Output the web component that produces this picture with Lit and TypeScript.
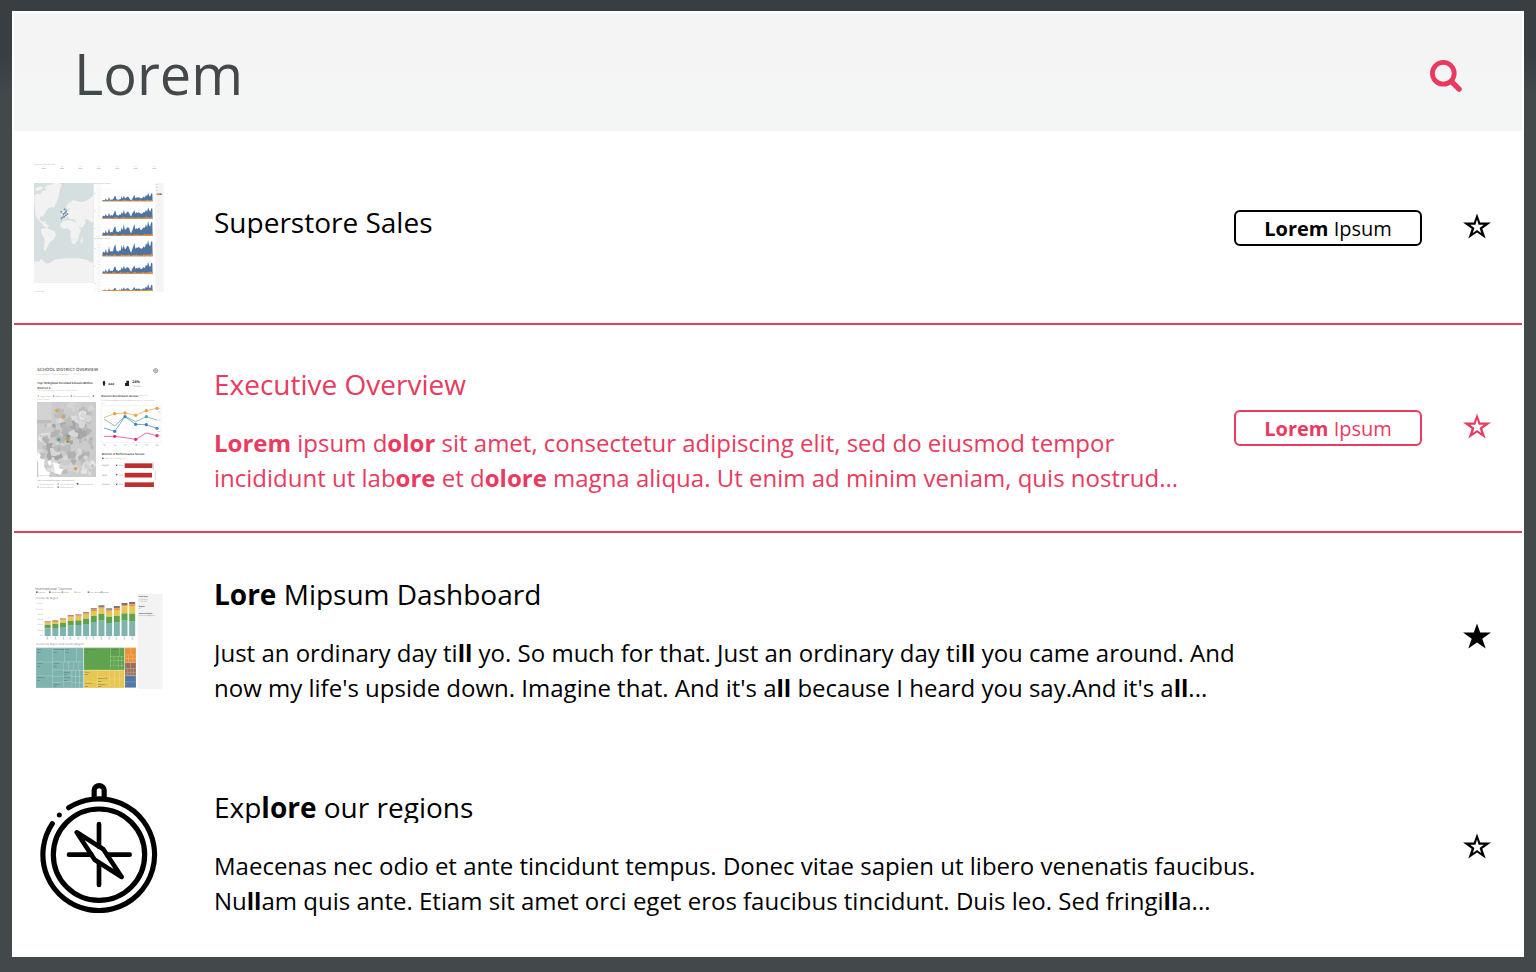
import { LitElement, html, svg, css, nothing } from "lit";
import { customElement, property } from "lit/decorators.js";

const rect = (x: number, y: number, w: number, h: number, fill: string) =>
  svg`<rect x=${x} y=${y} width=${w} height=${h} fill=${fill}></rect>`;
const label = (x: number, y: number, size: number, text: string, fill = "#888", weight = 400) =>
  svg`<text x=${x} y=${y} font-size=${size} fill=${fill} font-weight=${weight}>${text}</text>`;

/* Relative sales per month, shared by the six category charts. */
const WAVE = [.12,.16,.12,.3,.12,.14,.42,.15,.2,.16,.25,.5,.55,.22,.2,.16,.24,.22,.5,.3,.62,.32,.34,.5,.46,.4,.2,.12,.3,.48,.66,.34,.42,.38,.46,.4,.3,.34,.42,.5,.4,.72,.5,.98,.6,.5,.9,.85];

const salesArea = (base: number, h: number, k: number) => {
  const pow = [1, .75, .8, .7, .85, 1.4][k];
  const pts = WAVE.map((v, i) => {
    const wob = i % (k + 3) === 0 ? 1.12 : 1;
    return `${(236 + (i * 149) / 47).toFixed(1)},${(base - Math.pow(v, pow) * h * wob).toFixed(1)}`;
  });
  const low = WAVE.map((v, i) =>
    `${(236 + (i * 149) / 47).toFixed(1)},${(base - 1.5 - v * h * 0.1 - ((i + k) % 7 === 0 ? 3 : 0)).toFixed(1)}`);
  return svg`
    <polygon points="235,${base} ${pts.join(" ")} 386,${base}" fill="#4e74a3"></polygon>
    <polygon points="235,${base} ${low.join(" ")} 386,${base}" fill="#f28e2b"></polygon>`;
};

const superstore = () => svg`
  ${label(31, 30, 5, "Superstore Sales Overview", "#999")}
  ${[59, 114, 169, 224, 280, 335, 391].map(x => svg`${rect(x - 3, 34, 6, 1.5, "#ccc")}${rect(x - 6, 39, 12, 2, "#bbb")}`)}
  ${rect(30, 84, 179, 299, "#d5dfdf")}
  <g fill="#f1f2f1">
    <path d="M30 122l8-6 12 2 4-10 12-2 4 10 12-3 8 8-6 9 12 4 3 10-10 2-4 9-12 5-8 10-7 14-9 1-3 7 8 8 10-2 2 9 9 4-4 9-12-7-12-14-12-15z"></path>
    <path d="M36 99l14-6 8 5-9 8-15 2zM62 97l10-8 10 2-9 12 6 9-8 2zM76 92l12-8h20l6 6-6 11-2 18-8 20-8 19-9-3-6-15-1-17-9-11z"></path>
    <path d="M50 223l14-5 14 5 14 6 4 10-7 14-11 9-7 12-8 14-4-3 2-16 1-17-8-13z"></path>
    <path d="M109 207l9-10 19-1 14 4 9 3 7 18 5 3-5 12-6 20-9 12-8-3-5-22 1-15-9-8-14 1-8-7z"></path>
    <path d="M112 194l1-9 9-1 4-10 8-5 4-10-8 4-5-8 9-10 14-10 12 4 13 3 20-8 16-14v80l-8 2-8-7-10-4 2 13-9 13-8 2-11-17-6-9-14-1-8-9-4 7z"></path>
    <path d="M111 166l6 1 5 8-6 7-5-1 3-6zM171 253l5-6-1 15-5 3z"></path>
    <path d="M30 319l14 1 8-9 8 9 8 6 11-3 13-9 30-4 42 0 25 4 10 8 10 0v61H30z"></path>
  </g>
  <g fill="none" stroke="#e0e6e6" stroke-width="1"><path d="M48 145l8-6 8 7M142 164l11-7 15 8M123 210l18 18 14-5M140 253h18M66 236l18 8"></path></g>
  <g fill="#7592bd">${[[112,170],[118,177],[122,163],[121,185],[126,181],[113,190],[126,170],[117,187],[130,177],[123,174]].map(([x, y]) => svg`<circle cx=${x} cy=${y} r="2.9"></circle>`)}</g>
  <g fill="#d98567"><circle cx="127" cy="166" r="1.9"></circle><circle cx="119" cy="181" r="1.7"></circle><circle cx="112" cy="194" r="1.5"></circle></g>
  ${rect(210, 84, 24, 328, "#fbfbfb")}${rect(394, 84, 25, 328, "#f4f4f4")}
  ${label(211, 87, 4, "Monthly Sales by Segment", "#999")}
  ${label(211, 251, 4, "Monthly Sales by Product", "#999")}
  ${[[139, 27, 0], [191, 34, 1], [243, 46, 2], [304, 49, 3], [356, 36, 4], [408, 22, 5]].map(([b, h, k]) => svg`
    ${[0, 9, 18, 27, 36].map(d => svg`${rect(221, b - d, 7, 1.3, "#dedede")}<path d="M234 ${b - d}h153" stroke="#f6f6f6"></path>`)}
    ${rect(211, b - 24, 5, 1.5, "#ccc")}${salesArea(b, h, k)}`)}
  ${[87, 96, 106].map(y => rect(396, y, 6, 1.3, "#bbb"))}
  ${rect(398, 115, 8, 5, "#df885b")}${rect(406, 115, 7, 5, "#567dae")}
  ${label(32, 412, 4, "About this data", "#aaa")}`;

const LINES: [string, number[]][] = [
  ["#e8a33c", [188, 176, 174, 181, 167, 160]],
  ["#58a4a1", [192, 213, 184, 200, 185, 195]],
  ["#3f84bd", [219, 229, 185, 208, 209, 220]],
  ["#e62b82", [244, 244, 248, 253, 234, 242]],
];
const YEARS = [240, 272, 303, 335, 367, 399];

/* Census tracts: ragged patches of grey spread over the district map. */
const TRACTS = (() => {
  let seed = 11;
  const rnd = () => (seed = (seed * 16807) % 2147483647) / 2147483647;
  return Array.from({ length: 130 }, () => {
    const cx = 46 + rnd() * 163, cy = 148 + rnd() * 210, r = 5 + rnd() * 13;
    const n = 9;
    const pts = Array.from({ length: n }, (_, i) => {
      const a = (i / n) * Math.PI * 2, q = r * (0.45 + rnd() * 0.75);
      const x = Math.min(216, Math.max(39, cx + Math.cos(a) * q));
      const y = Math.min(366, Math.max(141, cy + Math.sin(a) * q));
      return `${x.toFixed(1)},${y.toFixed(1)}`;
    }).join(" ");
    const mid = cy > 205 && cy < 320 && cx > 60;
    const shades = mid ? ["#b4b4b4", "#a6a6a6", "#bcbcbc", "#d8d8d8", "#b0b0b0"] : ["#cfcfcf", "#dcdcdc", "#bdbdbd", "#e6e6e6", "#d6d6d6"];
    return { pts, fill: shades[Math.floor(rnd() * 5)] };
  });
})();

const school = () => svg`
  ${label(40, 49, 13.1, "SCHOOL DISTRICT OVERVIEW", "#555", 600)}
  ${label(40, 60, 5.7, "Select a district from the dropdown", "#aaa")}
  <path d="M147 57h24" stroke="#bbb" stroke-width="1"></path>
  <circle cx="395" cy="47" r="6.5" fill="#ddd" stroke="#888" stroke-width="2"></circle>
  <path d="M395 43v8M391 47h8" stroke="#888" stroke-width="1.5"></path>
  ${label(40, 87, 8.6, "Top 10 Highest Enrolled Schools Within", "#444", 700)}
  ${label(40, 101, 8.6, "District 4", "#444", 700)}
  ${label(40, 109, 5.5, "Filter by school type to see top 10 within district", "#bbb")}
  <circle cx="43" cy="123" r="2.5" fill="#e8a33c"></circle>${label(48, 126, 6, "High School", "#999")}
  <circle cx="89" cy="123" r="2.5" fill="#45a0a0"></circle>${label(94, 126, 6, "Middle School", "#999")}
  <circle cx="142" cy="123" r="2.5" fill="#3f84bd"></circle>${label(147, 126, 6, "Elementary School", "#999")}
  <circle cx="208" cy="123" r="2.5" fill="#d62b78"></circle>${label(40, 135, 6, "Other School", "#aaa")}
  ${rect(39, 141, 177, 225, "#cbcbcb")}
  ${TRACTS.map(t => svg`<polygon points=${t.pts} fill=${t.fill}></polygon>`)}
  ${rect(39, 141, 44, 54, "#d3d3d3")}${rect(39, 195, 44, 10, "#bebebe")}
  <g fill="#fff"><path d="M40 291l10 8-2 10 13 7-1 18 8 14 10 4-2 14H43V323l-4-4zM70 320l9-5 4 11-7 7zM87 322l20 5-3 12 13 4-7 17-17-5z"></path></g>
  ${[[99,167],[118,185],[155,341]].map(([x, y]) => svg`<circle cx=${x} cy=${y} r="5" fill="#dfa34d" stroke="#b78643" stroke-width=".6"></circle>`)}
  <circle cx="133" cy="244" r="4.5" fill="#54a99a"></circle><circle cx="104" cy="254" r="5" fill="#49a1a3"></circle><circle cx="131" cy="259" r="4.5" fill="#4e9a83"></circle>
  <circle cx="129" cy="250" r="5" fill="#c99a4a"></circle><circle cx="133" cy="254" r="5" fill="#d19a45"></circle>
  ${label(42, 364, 4.5, "© Mapbox © OSM", "#888")}
  ${label(39, 379, 5.5, "Map Area colored by district's nativity levels", "#888")}
  ${[[40,387],[100,387],[158,387],[40,397],[100,397]].map(([x, y], i) => svg`${rect(x, y - 3, 5, 5, ["#eee","#bbb","#555","#ccc","#999"][i])}${label(x + 7, y + 2, 5.5, "20,000 to 40,000", "#999")}`)}
  <path d="M238 78h4l2 5-2 9h-4l-2-9zM303 84h4v-7h8v16h-12z" fill="#222"></path>
  ${label(253, 89, 9, "###", "#444", 700)}${label(325, 83, 11, "28%", "#333", 700)}${label(326, 95, 7, "Poverty", "#999")}
  ${label(232, 127, 8.5, "District Enrollment Across", "#444", 700)}<path d="M342 121h29" stroke="#bbb"></path>
  ${label(232, 137, 6, "Click the dropdown to view additional district information", "#aaa")}
  ${label(232, 146, 5, "here.", "#aaa")}
  <rect x="231" y="152" width="180" height="110" fill="#fff" stroke="#ddd"></rect>
  <path d="M231 174h180M231 197h180M231 220h180M231 243h180" stroke="#f0f0f0"></path>
  ${LINES.map(([c, ys], k) => svg`
    <polyline points=${ys.map((y, i) => `${YEARS[i]},${y}`).join(" ")} fill="none" stroke=${c} stroke-width="2.1"></polyline>
    ${ys.map((y, i) => i === 0 || (k === 1 && i !== 4) || (k === 3 && (i === 2 || i === 4)) ? nothing : svg`<circle cx=${YEARS[i]} cy=${y} r="5" fill=${c}></circle>`)}`)}
  ${[161, 171, 195, 220, 229, 241].map(y => rect(y % 2 ? 401 : 394, y - 1, 8, 1.6, "#aaa"))}
  ${YEARS.map((x, i) => label(x - 5, 274, 7, `'${15 + i}`, "#888"))}
  ${label(233, 300, 8.7, "District 4 Performance Scores", "#444", 700)}
  ${rect(234, 308, 5, 4, "#bd4245")}${label(242, 312, 6, "Indicates a failed goal", "#aaa")}
  ${["English", "Math", "Science"].map((s, i) => svg`
    ${label(234, 334 + i * 28.5, 6.5, s, "#777")}
    <path d="M275 ${329 + i * 28.5}h6l-3 5z" fill="#333"></path>${label(282, 334 + i * 28.5, 6, "-3.2%", "#888")}
    ${rect(302, 325 + i * 28.5, [83, 82, 88][i], 14, "#bf2f30")}
    <path d="M${[388, 394, 388][i]} ${320 + i * 28.5}v26" stroke="#888" stroke-width="1"></path>`)}`;

/* Stacked column tops, followed by blue, brown, orange, yellow and green lower edges. */
const COLS = [
  [138,139,140,143,149,160],[136,137,138,141,147,159],[130,131,133,136,144,156],[120,122,124,127,138,152],
  [118,119,121,125,136,150],[111,113,115,119,131,147],[99,101,104,108,123,141],[91,93,97,101,117,137],
  [100,103,106,110,125,144],[93,96,100,105,123,143],[84,87,90,94,115,137],[81,84,88,93,116,140],
];

const tourism = () => {
  const cell = (x: number, y: number, w: number, h: number, c: string, t = "") => svg`
    <rect x=${x} y=${y} width=${w} height=${h} fill=${c} stroke="#fff" stroke-opacity=".4" stroke-width="1"></rect>
    ${t ? svg`${label(x + 2, y + 7, 5.3, t, "#3c5955")}${rect(x + 2, y + 12, 10, 1.5, "#527a72")}` : nothing}`;
  const T = "#7eb3ae", G = "#60a34f", Y = "#e7c652", O = "#ed9137", B = "#9a715d", U = "#5078a8";
  return svg`
  ${label(34, 45, 10.8, "International Tourism", "#666")}
  ${([[36,"America",U],[75,"Middle East",B],[113,"Africa",O],[152,"Asia",Y],[191,"The Americas",G],[230,"Europe",T]] as [number, string, string][])
    .map(([x, t, c]) => svg`${rect(x, 49, 5, 5, c)}${label(x + 6, 54, 5.5, t, "#888")}`)}
  ${rect(341, 57, 75, 285, "#f3f3f3")}
  ${label(344, 67, 5.3, "Key Range", "#444", 700)}${label(344, 74, 5, "1/1/2000 to", "#888")}${label(344, 81, 5, "12/31/2012", "#888")}
  ${label(344, 95, 5.3, "Region", "#444", 700)}${label(344, 102, 5, "All", "#888")}
  ${label(344, 116, 5.3, "Country/Region", "#444", 700)}${label(344, 123, 5, "No items highlighted", "#888")}
  ${label(37, 71, 8, "Income By Region", "#777")}
  ${["$1,200B", "$1,000B", "$800B", "$600B", "$400B", "$200B", "$0B"].map((t, i) => svg`<text x="57" y=${88 + i * 15.8} font-size="5.5" text-anchor="end" fill="#aaa">${t}</text><path d="M60 ${87 + i * 15.8}h276" stroke="#f2f2f2"></path>`)}
  ${COLS.map((ys, i) => {
    const e = [...ys, 183];
    return svg`${[U, B, O, Y, G, T].map((c, k) => rect(62 + i * 23.05, e[k], 18, e[k + 1] - e[k], c))}
      <text x=${73 + i * 23.05} y="195" transform="rotate(-90 ${73 + i * 23.05} 195)" font-size="5.5" fill="#777">${String(2001 + i)}</text>`;
  })}
  ${label(37, 211, 8, "Income by Region and Country/Region", "#777")}
  ${rect(36, 218, 142, 121, T)}${rect(180, 218, 121, 67, G)}${rect(180, 286, 121, 53, Y)}
  ${rect(303, 218, 33, 44, O)}${rect(303, 263, 33, 39, B)}
  ${cell(37,219,49,42,T,"Spain")}${cell(37,261,49,42,T,"France")}${cell(37,303,49,35,T,"Germany")}
  ${cell(86,219,36,42,T,"United Kingdom")}${cell(122,219,36,42,T,"Italy")}${cell(158,219,20,42,T)}
  ${cell(86,261,32,24,T,"Austria")}${cell(86,285,32,19,T)}${cell(86,304,32,18,T)}${cell(86,322,32,16,T,"Greece")}
  ${[118,134,148,163].map(x => cell(x,261,15,26,T))}${cell(118,287,26,16,T,"Poland")}${cell(118,303,26,16,T,"Croatia")}${cell(118,319,26,19,T)}
  ${[144,155,167].map(x => svg`${cell(x,287,11,17,T)}${cell(x,304,11,18,T)}${cell(x,322,11,16,T)}`)}
  ${cell(180,219,80,65,G,"United States")}${cell(260,219,26,25,G,"Canada")}${cell(286,219,15,25,G)}
  ${[260,273,283,292].map(x => svg`${cell(x,244,9,13,G)}${cell(x,257,9,14,G)}${cell(x,271,9,13,G)}`)}
  ${cell(180,286,40,35,Y,"China")}${cell(180,321,40,17,Y,"Thailand")}${cell(220,286,36,20,Y)}${cell(220,306,36,16,Y,"Macao SAR")}${cell(220,322,36,16,Y,"Malaysia")}
  ${[256,271,286].map(x => svg`${cell(x,286,15,26,Y)}${cell(x,312,15,26,Y)}`)}
  ${cell(303,219,18,21,O)}${cell(321,219,15,21,O)}${[303,314,325].map(x => svg`${cell(x,240,11,11,O)}${cell(x,251,11,11,O)}`)}
  ${cell(303,263,17,18,B)}${cell(320,263,16,18,B)}${[303,312,321,328].map(x => svg`${cell(x,281,8,11,B)}${cell(x,292,8,10,B)}`)}
  ${cell(303,303,33,18,U,"Australia")}${cell(303,321,33,17,U)}`;
};

const compass = () => svg`
  <g fill="none" stroke="#000" stroke-width="15.5" stroke-linecap="round" stroke-linejoin="round">
    <path d="M134 113A167.5 167.5 0 1 1 85 161"></path>
    <circle cx="225" cy="254" r="137"></circle>
    <path d="M210.500 80V60a15 13 0 0 1 30 0V80"></path>
    <path stroke-width="14" d="M225 162V230M225 280V345M135 254H202M249 254H317"></path>
    <path stroke-width="14" d="M158 187L238 238L293 321L212 269Z"></path>
  </g>
  <circle cx="106" cy="135" r="7.5"></circle>`;

const ART: Record<string, [string, () => unknown]> = {
  superstore: ["30 24 390 390", superstore],
  school: ["30 24 390 390", school],
  tourism: ["30 -6 390 390", tourism],
  compass: ["30 39 390 390", compass],
};

interface Result { art: string; title: unknown; lines?: unknown[]; badge?: boolean; starred?: boolean; active?: boolean; }

const RESULTS: Result[] = [
  { art: "superstore", title: "Superstore Sales", badge: true },
  { art: "school", title: "Executive Overview", badge: true, active: true, lines: [
    html`<b>Lorem</b> ipsum d<b>olor</b> sit amet, consectetur adipiscing elit, sed do eiusmod tempor`,
    html`incididunt ut lab<b>ore</b> et d<b>olore</b> magna aliqua. Ut enim ad minim veniam, quis nostrud...`] },
  { art: "tourism", title: html`<b>Lore</b> Mipsum Dashboard`, starred: true, lines: [
    html`Just an ordinary day ti<b>ll</b> yo. So much for that. Just an ordinary day ti<b>ll</b> you came around. And`,
    html`now my life's upside down. Imagine that. And it's a<b>ll</b> because I heard you say.And it's a<b>ll</b>...`] },
  { art: "compass", title: html`Exp<b>lore</b> our regions`, lines: [
    html`Maecenas nec odio et ante tincidunt tempus. Donec vitae sapien ut libero venenatis faucibus.`,
    html`Nu<b>ll</b>am quis ante. Etiam sit amet orci eget eros faucibus tincidunt. Duis leo. Sed fringi<b>ll</b>a...`] },
];

@customElement("result-row")
class ResultRow extends LitElement {
  @property({ attribute: false }) item!: Result;

  static styles = css`
    :host { display: block; color: #000; }
    .row { display: flex; align-items: center; height: 210px; box-sizing: border-box; padding: 0 31px 0 20px; }
    .first { height: 192px; padding-top: 2px; }
    .active { color: #e93a60; border: solid #e93a60; border-width: 2px 0; }
    .thumb { width: 130px; height: 130px; flex: none; font-family: "Open Sans", sans-serif; text-rendering: geometricPrecision; }
    .text { flex: 1; margin-left: 50px; padding-top: 7px; white-space: nowrap; min-width: 0; }
    .first .text { padding: 0 0 12px; }
    .last .text { padding-top: 13px; }
    .title { font-size: 28px; line-height: 32px; overflow: hidden; }
    .desc { font-size: 24px; line-height: 35px; margin-top: 25px; overflow: hidden; }
    .badge { box-sizing: border-box; flex: none; width: 188px; height: 36px; border: 2px solid currentColor; border-radius: 6px; font-size: 20px; line-height: 34px; text-align: center; margin-right: 41px; }
    .star { width: 28px; height: 27px; flex: none; margin-bottom: 4px; }
    b { font-weight: 700; }
  `;

  render() {
    const { art, title, lines, badge, starred, active } = this.item;
    const [box, draw] = ART[art];
    const kind = active ? "active" : art === "superstore" ? "first" : art === "compass" ? "last" : "";
    return html`<div class="row ${kind}">
      <svg class="thumb" viewBox=${box}>${draw()}</svg>
      <div class="text">
        <div class="title">${title}</div>
        ${lines ? html`<div class="desc">${lines.map(l => html`<div>${l}</div>`)}</div>` : nothing}
      </div>
      ${badge ? html`<div class="badge"><b>Lorem</b> Ipsum</div>` : nothing}
      <svg class="star" viewBox="0 0 28 27">
        ${starred
          ? svg`<path d="M14 .5L17.2 9.6H28L19.3 15.7L22.7 25.6L14 19.5L5.3 25.6L8.7 15.7L0 9.6H10.8Z"></path>`
          : svg`<path fill="currentColor" fill-rule="evenodd" d="M14 .5L17.2 9.6H28L19.3 15.7L22.7 25.6L14 19.5L5.3 25.6L8.7 15.7L0 9.6H10.8ZM14 6.4L12.4 11.7H7.2L11.4 14.9L9.8 20.1L14 16.9L18.2 20.1L16.6 14.9L20.8 11.7H15.6Z"></path>`}
      </svg>
    </div>`;
  }
}

@customElement("app-root")
class AppRoot extends LitElement {
  static styles = css`
    :host { display: block; box-sizing: border-box; height: 972px; padding: 11px 12px 15px; overflow: hidden;
      background: linear-gradient(#393e42 0, #393e42 55px, #43484b 95px, #43484b 100%);
      font-family: "Open Sans", sans-serif; }
    .panel { box-sizing: border-box; height: 946px; background: #fff; padding: 2px 2px 0; }
    .search { display: flex; align-items: center; justify-content: space-between; box-sizing: border-box; height: 118px;
      padding: 4px 59px 0 60px; background: linear-gradient(#f4f4f4 0, #f4f4f4 60px, #f4f6f5 61px); }
    .query { font-size: 56px; line-height: 76px; color: #43484b; margin-bottom: 2px; }
    .glass { width: 34px; height: 34px; margin-top: 4px; }
  `;

  render() {
    return html`<div class="panel">
      <div class="search">
        <div class="query">Lorem</div>
        <svg class="glass" viewBox="0 0 34 34" fill="none" stroke="#e93a60">
          <circle cx="14.3" cy="14.3" r="10.9" stroke-width="4.8"></circle>
          <path d="M22.5 22.5L30.1 30.1" stroke-width="5.4" stroke-linecap="round"></path>
        </svg>
      </div>
      ${RESULTS.map(r => html`<result-row .item=${r}></result-row>`)}
    </div>`;
  }
}
